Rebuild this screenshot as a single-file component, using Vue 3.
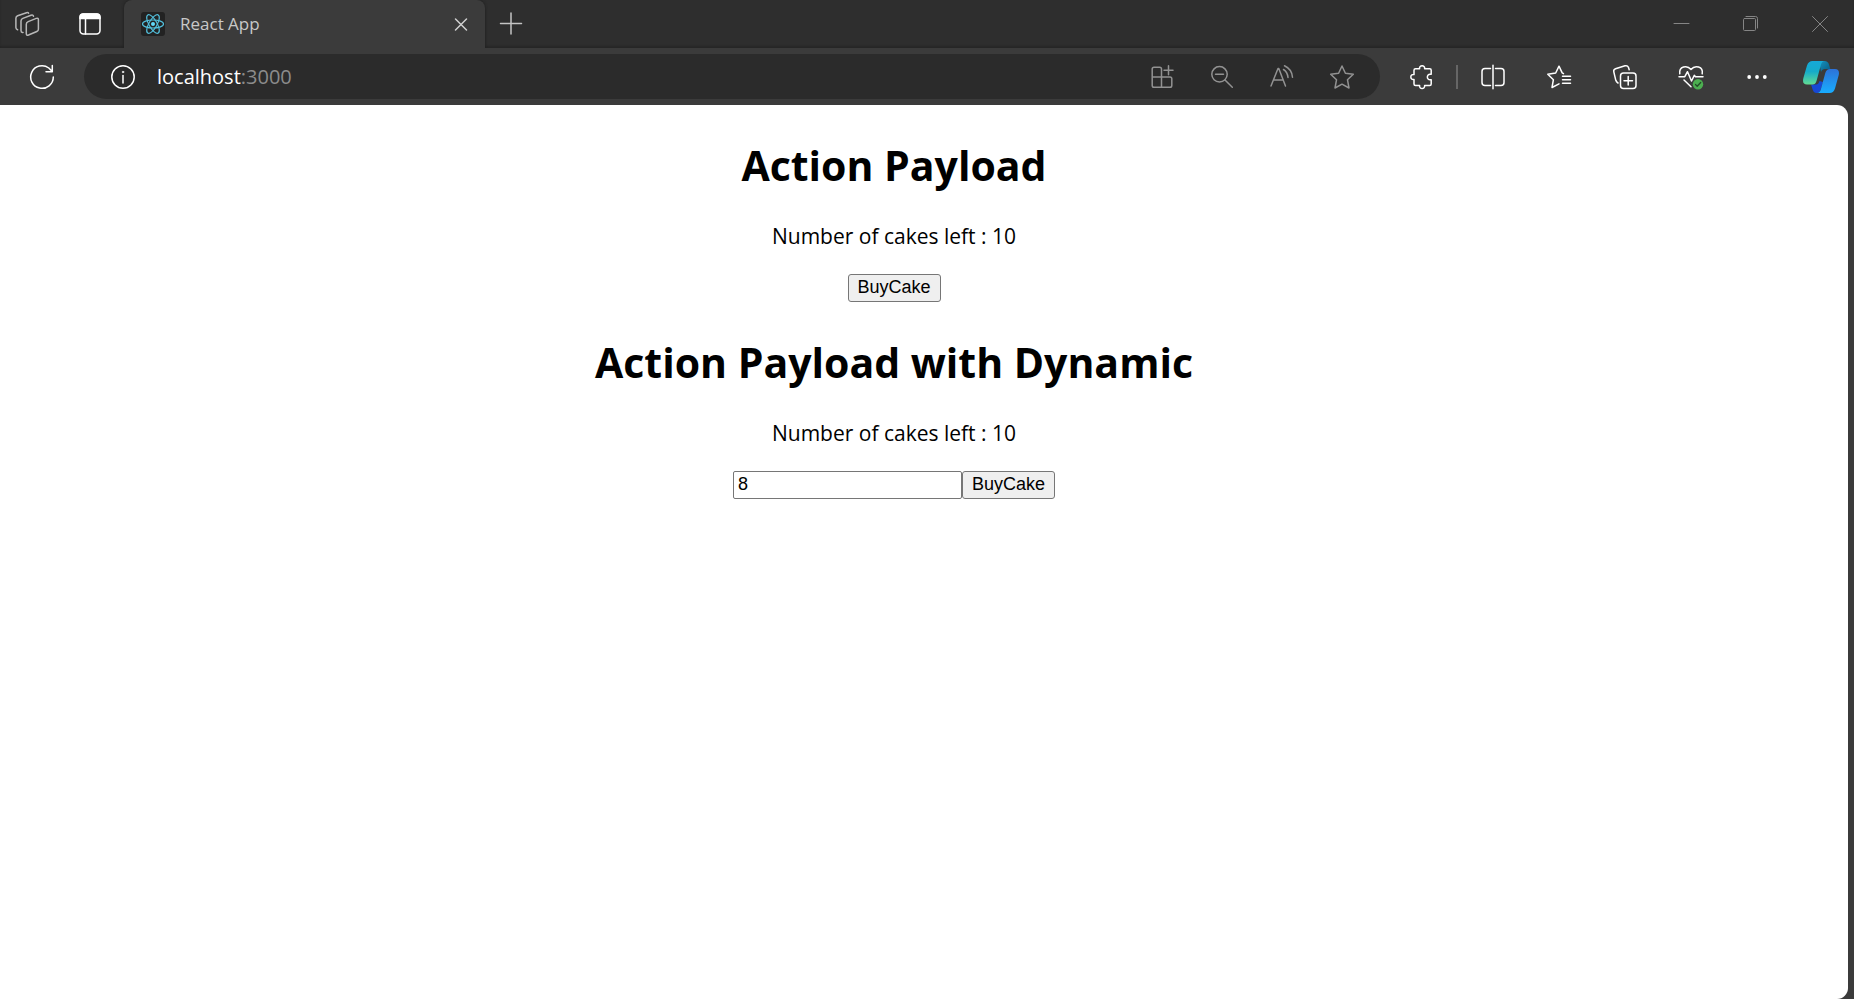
<script setup>
import { ref } from 'vue'

const address = ref('localhost:3000')
const cakes = ref(10)
const dynamicCakes = ref(10)
const amount = ref('8')

function buyOne() {
  cakes.value -= 1
}
function buyMany() {
  dynamicCakes.value -= Number(amount.value)
}
</script>

<template>
  <div class="browser">
    <header class="tab-strip">
      <button class="strip-btn workspaces" aria-label="Workspaces">
        <svg class="icon" viewBox="0 0 24 24">
          <path d="M13.2 9.6 21.3 6.4Q23.4 5.7 23.4 7.8V17.2Q23.4 18.8 21.8 19.5L13.5 23Q11.3 23.8 11.3 21.6V12.2Q11.3 10.4 13.2 9.6Z" />
          <path d="M8 20.6H7.5Q6 20.4 6 18.5V9Q6 7.2 7.8 6.4L16 3.2Q18 2.5 18.5 4.2" />
          <path d="M2.6 17.8Q.9 17.2.9 15.5V6.2Q.9 4.5 2.6 3.8L11.5.7Q13.2.2 13.6 1.2" />
        </svg>
      </button>
      <button class="strip-btn tab-menu" aria-label="Tab actions menu">
        <svg class="icon" viewBox="0 0 24 24">
          <rect x="2" y="2" width="20" height="20" rx="3.5" />
          <path d="M2 6.5V5Q2 2 5 2H19Q22 2 22 5V6.5Z" fill="currentColor" />
          <path d="M7.5 7V22" />
        </svg>
      </button>
      <div class="tab">
        <svg class="favicon" viewBox="0 0 24 24" aria-hidden="true">
          <rect width="24" height="24" rx="3" fill="#222" />
          <g fill="none" stroke="#53c1de" stroke-width="1.2">
            <ellipse cx="12" cy="12" rx="10.5" ry="4" />
            <ellipse cx="12" cy="12" rx="10.5" ry="4" transform="rotate(60 12 12)" />
            <ellipse cx="12" cy="12" rx="10.5" ry="4" transform="rotate(120 12 12)" />
          </g>
          <circle cx="12" cy="12" r="2" fill="#61dafb" />
        </svg>
        <span class="tab-title">React App</span>
        <button class="tab-close" aria-label="Close tab">
          <svg class="icon" viewBox="0 0 24 24"><path d="M6.5 7 17.5 18M17.5 7 6.5 18" /></svg>
        </button>
      </div>
      <button class="new-tab" aria-label="New tab">
        <svg class="icon" viewBox="0 0 24 24"><path d="M1.5 11.5H22.5M12 1V22" /></svg>
      </button>
      <div class="window-controls">
        <button aria-label="Minimize">
          <svg class="icon thin" viewBox="0 0 24 24"><path d="M4 11.5H19" /></svg>
        </button>
        <button aria-label="Restore">
          <svg class="icon thin" viewBox="0 0 24 24">
            <rect x="4.5" y="6.5" width="12" height="12" rx="1" />
            <path d="M7 4.5H16.5Q18.5 4.5 18.5 6.5V16" />
          </svg>
        </button>
        <button aria-label="Close">
          <svg class="icon thin" viewBox="0 0 24 24"><path d="M4.5 4.5 19.5 19.5M19.5 4.5 4.5 19.5" /></svg>
        </button>
      </div>
    </header>

    <nav class="toolbar">
      <button class="refresh" aria-label="Refresh">
        <svg class="icon" viewBox="0 0 24 24">
          <path d="M23.3 12A11.3 11.3 0 1 1 18.8 3L22 6.3M22.3 .5V6.8H16" />
        </svg>
      </button>
      <div class="address">
        <button class="site-info" aria-label="View site information">
          <svg class="icon" viewBox="0 0 24 24">
            <circle cx="12" cy="12" r="11.2" />
            <path d="M12 10.5V18" />
            <circle cx="12" cy="7" r=".8" fill="currentColor" stroke-width=".6" />
          </svg>
        </button>
        <a class="url" href="#" :aria-label="address">localhost<span class="port">:3000</span></a>
        <div class="address-actions">
          <button aria-label="App available">
            <svg class="icon" viewBox="0 0 24 24">
              <path d="M11.5 12V4Q11.5 2.2 9.7 2.2H4Q2.2 2.2 2.2 4V20.5Q2.2 22.3 4 22.3H20Q21.8 22.3 21.8 20.5V13.8Q21.8 12 20 12H2.2M11.5 12V22.3M18.5 .8V9.8M14 5.3H23" />
            </svg>
          </button>
          <button aria-label="Zoom">
            <svg class="icon" viewBox="0 0 24 24">
              <circle cx="9.5" cy="9.3" r="7.7" />
              <path d="M15 15 22.3 22.2M5.5 9.3H13.5" />
            </svg>
          </button>
          <button aria-label="Read aloud">
            <svg class="icon" viewBox="0 0 24 24">
              <path d="M1 21 8 3.5H8.8L15.5 21M3.5 15H13.2M13.5 4.5Q17.5 7 18 12.5M14.5 .8Q21.8 4.2 22.5 12.2" />
            </svg>
          </button>
          <button aria-label="Add to favorites">
            <svg class="icon" viewBox="0 0 24 24">
              <path d="M12 1 15.4 8.2 23.3 9.2 17.5 14.8 19 23 12 19.2 5 23 6.5 14.8 .7 9.2 8.6 8.2Z" />
            </svg>
          </button>
        </div>
      </div>
      <div class="toolbar-actions">
        <button aria-label="Extensions">
          <svg class="icon" viewBox="0 0 24 24">
            <path d="M4 8V5.2Q4 3.7 5.5 3.7H9.6C8.8 -.2 15.4 -.2 14.6 3.7H19.7Q21.2 3.7 21.2 5.2V9.2H20.5C16.3 8.6 16.3 15.4 20.5 14.8H21.2V19Q21.2 20.5 19.7 20.5H14.6C15.4 24.4 8.8 24.4 9.6 20.5H5.5Q4 20.5 4 19V14.5C-.2 15.3 -.2 8.7 4 9.5Z" />
          </svg>
        </button>
        <span class="divider"></span>
        <button aria-label="Split screen">
          <svg class="icon" viewBox="0 0 24 24">
            <path d="M9.5 3.5H4Q1 3.5 1 6.5V17.5Q1 20.5 4 20.5H9.5M14.5 3.5H20Q23 3.5 23 6.5V17.5Q23 20.5 20 20.5H14.5M12 .3V23.7" />
          </svg>
        </button>
        <button aria-label="Favorites">
          <svg class="icon" viewBox="0 0 24 24">
            <path d="M23.5 11.2H15.5M23.5 14.8H15.5M23.5 18.3H15.5M16.5 8.6 15.2 7.8 12 1.2 8.7 8 .8 9.2 6.4 14.7 5 22.5 12 18.8" />
          </svg>
        </button>
        <button aria-label="Collections">
          <svg class="icon" viewBox="0 0 24 24">
            <rect x="7.5" y="8" width="15.5" height="15.5" rx="3" />
            <path d="M15.2 11.5V20M11 15.8H19.5M5 18Q3.3 17 2.8 15.3L.8 6.8Q.3 4.7 2.5 3.8L12 .8Q14.5 .2 15.4 2.2L16.2 4.8" />
          </svg>
        </button>
        <button aria-label="Browser essentials">
          <svg class="icon" viewBox="0 0 24 24">
            <path d="M.8 8.8C-.3 1.5 8 -.5 12 4.5C16 -.5 24.5 1.5 23.2 8.8M0 11.7H5.8L8.5 6.7 12.5 16 15.3 10.3 16.5 11.7H24M5 15 12 21.8" />
            <circle cx="19" cy="19.3" r="5.2" fill="#4caf50" stroke="none" />
            <path d="M16.5 19.5 18.2 21.2 21.7 17.5" stroke="#234d27" stroke-width="1.3" />
          </svg>
        </button>
        <button aria-label="Settings and more">
          <svg class="icon dots" viewBox="0 0 24 24">
            <circle cx="4.2" cy="12" r="1.9" />
            <circle cx="12" cy="12" r="1.9" />
            <circle cx="19.8" cy="12" r="1.9" />
          </svg>
        </button>
        <button class="copilot" aria-label="Copilot">
          <svg viewBox="0 0 36 32">
            <defs>
              <linearGradient id="left" x1="0" y1="0" x2="0" y2="1">
                <stop offset="0" stop-color="#16a9d8" />
                <stop offset=".45" stop-color="#16abc9" />
                <stop offset="1" stop-color="#62dc93" />
              </linearGradient>
              <linearGradient id="right" x1="0" y1="0" x2="0" y2="1">
                <stop offset="0" stop-color="#2d72d9" />
                <stop offset="1" stop-color="#18adff" />
              </linearGradient>
              <linearGradient id="fold" x1="0" y1="0" x2="1" y2="1">
                <stop offset="0" stop-color="#1693be" />
                <stop offset="1" stop-color="#075b83" />
              </linearGradient>
            </defs>
            <path d="M16 0H21.5Q25 0 26 3.5L27.3 8H22Q19 8 18 11Z" fill="url(#fold)" />
            <path d="M8 23.5H13Q15.5 23.5 16.5 20L20 21 17.5 29Q16.5 32 14 32H13.5Q10.8 32 9.8 29Z" fill="#1748d4" />
            <path d="M9.5 0H21.5Q19 .2 18 3.5L13.5 20Q12.5 23.5 9.5 23.5H4Q-1.2 23.5 .4 17L4 4.5Q5.5 0 9.5 0Z" fill="url(#left)" />
            <path d="M27 8H32Q37.2 8.3 35.6 14.5L32 27.5Q30.5 32 26.5 32H14Q16.8 31.8 17.8 28.5L22.3 12Q23.5 8 27 8Z" fill="url(#right)" />
          </svg>
        </button>
      </div>
    </nav>

    <main class="page">
      <section>
        <h1>Action Payload</h1>
        <p>Number of cakes left : {{ cakes }}</p>
        <div class="controls">
          <button class="buy" @click="buyOne">BuyCake</button>
        </div>
      </section>
      <section>
        <h1>Action Payload with Dynamic</h1>
        <p>Number of cakes left : {{ dynamicCakes }}</p>
        <div class="controls">
          <input v-model="amount" class="amount" type="text" aria-label="Number of cakes" />
          <button class="buy" @click="buyMany">BuyCake</button>
        </div>
      </section>
    </main>
  </div>
</template>

<style>
body {
  margin: 0;
  background: #3b3b3b;
}
</style>

<style scoped>
.browser {
  display: flex;
  flex-direction: column;
  min-height: 100vh;
  background: #3b3b3b;
  color: #fff;
  font-family: "Open Sans", "Noto Sans", sans-serif;
}
.browser * {
  box-sizing: border-box;
}
button {
  display: flex;
  align-items: center;
  justify-content: center;
  flex: none;
  padding: 0;
  border: 0;
  background: none;
  color: inherit;
}
.icon {
  display: block;
  width: 24px;
  height: 24px;
  fill: none;
  stroke: currentColor;
  stroke-width: 1.5;
  stroke-linejoin: round;
  stroke-linecap: round;
  overflow: visible;
}
.icon.thin {
  stroke-width: 1;
}
.icon.dots {
  fill: currentColor;
  stroke: none;
}
.tab-strip {
  display: flex;
  height: 48px;
  background: #2e2e2e;
  box-shadow: inset 0 -2px 2px #262626;
}
.strip-btn {
  width: 62px;
}
.workspaces {
  width: 54px;
  margin-right: 5px;
  color: #b8b8b8;
}
.tab-menu {
  margin-right: 3px;
}
.tab {
  display: flex;
  align-items: center;
  width: 361px;
  padding: 0 12px 0 17px;
  border-radius: 8px 8px 0 0;
  background: #3b3b3b;
  box-shadow: 0 0 3px #1c1c1c;
  clip-path: inset(0 -4px 0 -4px);
}
.favicon {
  width: 24px;
  height: 24px;
}
.tab-title {
  flex: 1;
  margin-left: 15px;
  color: #c8c8c8;
  font-size: 17px;
  line-height: 24px;
}
.tab-close {
  color: #d0d0d0;
}
.new-tab {
  width: 52px;
  color: #c4c4c4;
}
.window-controls {
  display: flex;
  margin-left: auto;
  color: #858585;
}
.window-controls button {
  width: 69px;
}
.toolbar {
  display: flex;
  align-items: center;
  height: 57px;
  padding-right: 2px;
}
.refresh {
  width: 84px;
}
.address {
  display: flex;
  align-items: center;
  flex: 1;
  height: 45px;
  margin-right: 9px;
  padding: 0 8px 0 27px;
  border-radius: 23px;
  background: #2b2b2b;
}
.url {
  flex: 1;
  margin-left: 22px;
  color: #fff;
  font-size: 20px;
  line-height: 28px;
  text-decoration: none;
}
.port {
  color: #8c8c8c;
}
.address-actions {
  display: flex;
  color: #929292;
}
.address-actions button {
  width: 60px;
}
.toolbar-actions {
  display: flex;
  align-items: center;
}
.toolbar-actions button {
  width: 66px;
}
.divider {
  width: 2px;
  height: 24px;
  margin: 0 2px 0 1px;
  background: #666;
}
.toolbar-actions .copilot {
  width: 62px;
}
.copilot svg {
  width: 36px;
  height: 32px;
}
.page {
  flex: 1;
  margin-right: 6px;
  padding: 30px 60px 0 0;
  border-radius: 0 11px 11px 0;
  background: #fff;
  color: #000;
  text-align: center;
}
section {
  height: 197px;
}
h1 {
  margin: 0;
  font-size: 41px;
  line-height: 60px;
  font-weight: 700;
}
p {
  margin: 26px 0 23px;
  font-size: 21px;
  line-height: 30px;
}
.controls {
  display: flex;
  justify-content: center;
}
.buy,
.amount {
  height: 28px;
  font-family: Arial, "Liberation Sans", sans-serif;
  font-size: 18px;
  line-height: 22px;
  color: #000;
}
.buy {
  width: 93px;
  padding-bottom: 2px;
  border: 1px solid #767676;
  border-radius: 3px;
  background: #efefef;
}
.amount {
  width: 229px;
  padding: 0 4px 2px;
  border: 1px solid #767676;
  border-radius: 2px;
  background: #fff;
}
</style>
